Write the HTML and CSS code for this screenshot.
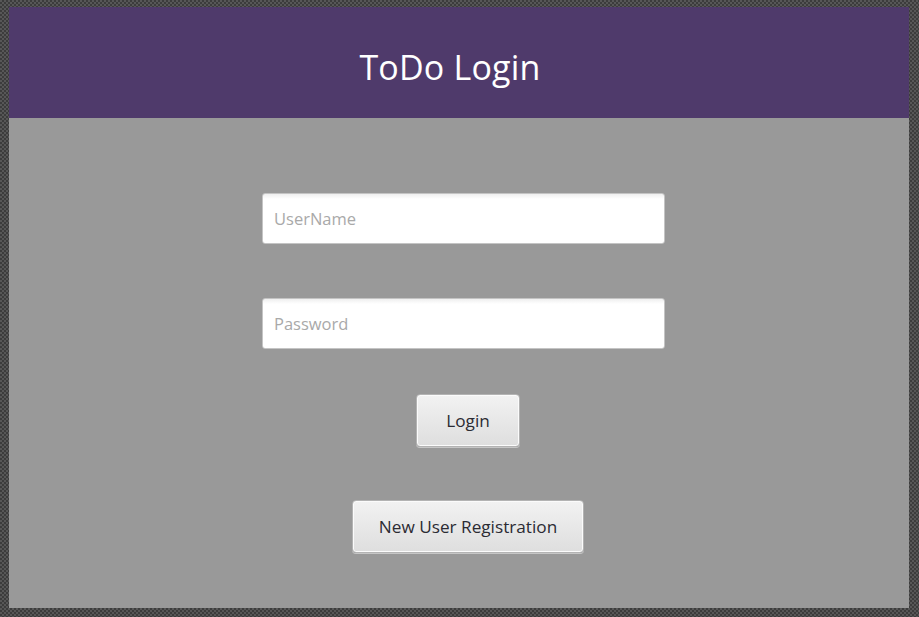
FILE: index.html
```html
<!DOCTYPE html>
<html>
<head>
<meta charset="utf-8">
<link rel="stylesheet" href="styles.css">
</head>
<body>
<div class="window">
  <header class="header"><h1 class="title">ToDo Login</h1></header>
  <main class="content">
    <input class="field" type="text" placeholder="UserName">
    <input class="field field-second" type="password" placeholder="Password">
    <button class="btn btn-login">Login</button>
    <button class="btn btn-reg">New User Registration</button>
  </main>
</div>
</body>
</html>
```
FILE: styles.css
```css
html, body {
  margin: 0;
  height: 100%;
}
body {
  background-color: #4a4a4a;
  background-image: repeating-conic-gradient(#3c3c3c 0 25%, #575757 0 50%);
  background-size: 4px 4px;
  padding: 7px 10px 9px 9px;
  box-sizing: border-box;
  font-family: "Open Sans", "Segoe UI", sans-serif;
}
.window {
  width: 900px;
  height: 601px;
  background: #999999;
  display: flex;
  flex-direction: column;
}
.header {
  height: 111px;
  background: #4f3a6b;
  display: flex;
  align-items: center;
  justify-content: center;
}
.title {
  margin: 9px 18px 0 0;
  font-family: "Open Sans", sans-serif;
  font-weight: 400;
  font-size: 34px;
  color: #ffffff;
  letter-spacing: 0.2px;
}
.content {
  display: flex;
  flex-direction: column;
  align-items: center;
  padding-top: 75px;
}
.field {
  width: 403px;
  height: 51px;
  box-sizing: border-box;
  margin: 0 0 0 9px;
  padding: 0 11px;
  border: 1px solid #c4c4c4;
  border-radius: 3px;
  background: linear-gradient(#efefef 0, #ffffff 5px);
  font-family: "Open Sans", sans-serif;
  font-size: 16.5px;
  color: #333;
  outline: none;
}
.field::placeholder {
  color: #a9a9a9;
}
.field-second {
  margin-top: 54px;
}
.btn {
  height: 53px;
  box-sizing: border-box;
  margin-left: 18px;
  border: 1px solid #b3b3b3;
  border-radius: 4px;
  background: linear-gradient(#f2f2f2, #dedede);
  box-shadow: inset 0 0 0 1px #fbfbfb, 0 1px 0 #c6c6c6;
  font-family: "Open Sans", sans-serif;
  font-size: 17.2px;
  color: #2b2b33;
  padding: 0;
}
.btn-login {
  width: 104px;
  margin-top: 45px;
}
.btn-reg {
  width: 232px;
  margin-top: 53px;
}
```
